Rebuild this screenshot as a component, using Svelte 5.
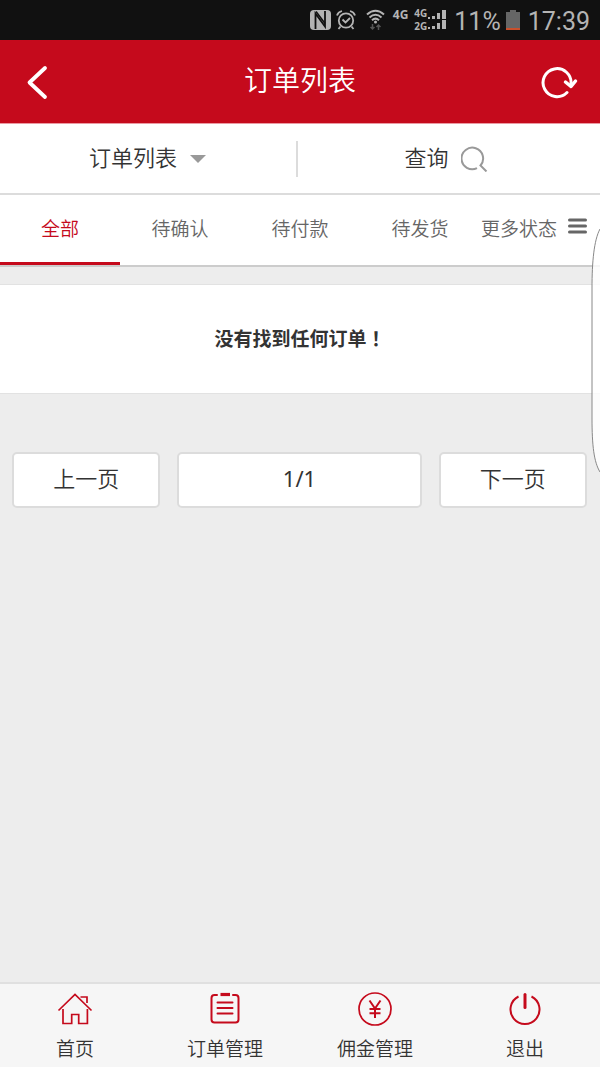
<script>
    const tabs = ['全部', '待确认', '待付款', '待发货'];
    const menu = [
        { name: 'home', label: '首页' },
        { name: 'orders', label: '订单管理' },
        { name: 'commission', label: '佣金管理' },
        { name: 'exit', label: '退出' }
    ];

    let activeTab = '全部';
    let page = 1;
    let pageCount = 1;

    function changePage(step) {
        page = Math.min(pageCount, Math.max(1, page + step));
    }
</script>

<style>
    :global(body) {
        margin: 0;
    }
    .app {
        position: relative;
        display: flex;
        flex-direction: column;
        min-height: 100vh;
        background: #ededed;
        color: #333;
        font-family: "Noto Sans", "Noto Sans CJK SC", sans-serif;
        font-weight: 350;
    }
    button {
        margin: 0;
        padding: 0;
        border: none;
        background: none;
        color: inherit;
        font: inherit;
        cursor: pointer;
    }
    a {
        color: inherit;
        text-decoration: none;
    }
    svg {
        display: block;
        flex: none;
        fill: none;
    }

    /* phone status bar */
    .status {
        display: flex;
        align-items: center;
        justify-content: flex-end;
        height: 40px;
        padding-right: 10px;
        background: #111;
        color: #b4b4b4;
        font-family: Roboto, sans-serif;
        font-size: 25px;
        font-weight: 400;
    }
    .status .time {
        padding-top: 2px;
    }
    .status .nfc {
        margin-right: 5px;
    }
    .status .wifi {
        margin: 0 8px 0 10px;
    }
    .network {
        margin-bottom: 10px;
        font: bold 12px/12px "Noto Sans", sans-serif;
    }
    .sims {
        display: flex;
        align-items: center;
        gap: 1px;
        margin: 0 8px 0 6px;
        font: bold 10px/13px "Open Sans", sans-serif;
    }
    .sims div {
        display: flex;
        flex-direction: column;
    }
    .battery {
        margin: 0 8px 0 5px;
    }

    header {
        display: flex;
        align-items: center;
        justify-content: space-between;
        height: 84px;
        padding: 0 22px;
        border-bottom: 1px solid #eb9aa3;
        box-sizing: border-box;
        background: #c50a1c;
        color: #fff;
    }
    header button {
        display: flex;
        width: 38px;
    }
    header button:last-child {
        justify-content: flex-end;
    }
    h1 {
        margin: 0 0 3px;
        font-size: 28px;
        font-weight: 350;
        line-height: 40px;
    }

    .filters {
        display: flex;
        align-items: center;
        height: 69px;
        padding-right: 6px;
        border-bottom: 2px solid #dcdcdc;
        background: #fff;
        font-size: 22px;
        line-height: 32px;
    }
    .filters button {
        display: flex;
        flex: 1;
        align-items: center;
        justify-content: center;
        gap: 12px;
    }
    .filters span {
        padding-bottom: 4px;
    }
    .filters button + button {
        border-left: 2px solid #dcdcdc;
    }

    .tabs {
        display: flex;
        height: 70px;
        border-bottom: 2px solid #ccc;
        background: #fff;
        color: #666;
        font-size: 19px;
        line-height: 28px;
    }
    .tabs button {
        display: flex;
        flex: 0 0 20%;
        align-items: center;
        justify-content: center;
        gap: 11px;
        border-top: 3px solid transparent;
        border-bottom: 3px solid transparent;
        white-space: nowrap;
    }
    .tabs span {
        padding-bottom: 3px;
    }
    .tabs .active {
        border-bottom-color: #c50a1c;
        color: #c50a1c;
    }
    .tabs .more {
        padding-right: 12px;
    }
    .tabs svg {
        margin-bottom: 8px;
    }

    main {
        flex: 1;
        padding-top: 17px;
    }
    .empty {
        margin: 0;
        padding: 40px 0;
        border: solid #e2e2e2;
        border-width: 1px 0;
        background: #fff;
        font-size: 19px;
        font-weight: 700;
        line-height: 28px;
        text-align: center;
    }
    /* keeps the exclamation mark in the middle of its cell */
    .mark {
        font-family: "Noto Sans CJK TC", sans-serif;
        line-height: 1;
    }
    .pager {
        display: flex;
        gap: 17px;
        margin: 58px 13px 0 12px;
        font-size: 22px;
        line-height: 32px;
    }
    .pager > * {
        flex: 3;
        box-sizing: border-box;
        padding: 8px 0 12px;
        border: 2px solid #dcdcdc;
        border-radius: 5px;
        background: #fff;
        text-align: center;
    }
    .pager .current {
        flex: 5;
        font-weight: 400;
    }

    footer {
        display: flex;
        border-top: 2px solid #e0e0e0;
        background: #f6f6f6;
    }
    footer a {
        display: flex;
        flex: 1;
        flex-direction: column;
        align-items: center;
        gap: 8px;
        padding: 7px 0 4px;
        font-size: 19px;
        line-height: 28px;
    }
    footer svg {
        stroke: #c50a1c;
        stroke-width: 2;
    }

    /* handle of the slide-in edge panel */
    .edge {
        position: absolute;
        top: 228px;
        right: 0;
    }
</style>

<div class="app">
    <div class="status">
        <svg class="nfc" width="21" height="20" viewBox="0 0 21 20">
            <rect width="21" height="20" rx="4" fill="#b4b4b4" />
            <path d="M5.500 19V3.500L15 16.500V1" stroke="#111" stroke-width="1.800" />
            <path d="M6 1.500l9 12" stroke="#111" stroke-width="1.500" />
        </svg>
        <svg width="20" height="20" viewBox="0 0 20 20" stroke="#b4b4b4" stroke-width="1.800">
            <circle cx="10" cy="10.500" r="7.200" />
            <path d="M6.500 9.500l3 3 4.500-4.500M4.500 16.500l-2 2.500M15.500 16.500l2 2.500M1 5.500Q2 2 6 1M19 5.500Q18 2 14 1" />
        </svg>
        <svg class="wifi" width="19" height="22" viewBox="0 0 19 22" stroke="#b4b4b4" stroke-width="2">
            <path d="M1 5.500Q9.500-2 18 5.500M3.500 8.500Q9.500 3 15.500 8.500M6 11.300Q9.500 8 13 11.300" />
            <circle cx="9.500" cy="13" r="1.500" fill="#b4b4b4" stroke="none" />
            <path d="M6.500 15v5M4.500 18l2 2 2-2M12.500 21v-5M10.500 18l2-2 2 2" stroke="#555" stroke-width="1.500" />
        </svg>
        <span class="network">4G</span>
        <div class="sims">
            <div>
                <span>4G</span>
                <span>2G</span>
            </div>
            <svg width="18" height="20" viewBox="0 0 18 20">
                <path d="M0 7h2v2H0zM4 6h3v3H4zM9 3h3v6H9zM14 0h4v9h-4zM0 17h2v2H0zM4 16h3v3H4zM9 13h3v6H9zM14 10h4v9h-4z" fill="#b4b4b4" />
            </svg>
        </div>
        <span class="time">11%</span>
        <svg class="battery" width="14" height="20" viewBox="0 0 14 20">
            <path d="M0 2h4V0h6v2h4v18H0z" fill="#666" />
            <path d="M0 18h14v2H0z" fill="#c9502c" />
        </svg>
        <span class="time">17:39</span>
    </div>

    <header>
        <button aria-label="返回">
            <svg width="30" height="36" viewBox="0 0 30 36">
                <path d="M23 4L7.500 18.500 23 33" stroke="#fff" stroke-width="3.800" stroke-linecap="round" stroke-linejoin="round" />
            </svg>
        </button>
        <h1>订单列表</h1>
        <button aria-label="刷新">
            <svg width="38" height="36" viewBox="0 0 38 36" stroke="#fff" stroke-width="3" stroke-linecap="round" stroke-linejoin="round">
                <path d="M27 28.500A14 14 0 1 1 31 20" />
                <path d="M25.500 18l5.500 4.500 4.500-5.500" stroke-width="3.500" />
            </svg>
        </button>
    </header>

    <div class="filters">
        <button>
            <span>订单列表</span>
            <svg width="18" height="8" viewBox="0 0 18 8"><path d="M1 0h16L9 8z" fill="#999" /></svg>
        </button>
        <button>
            <span>查询</span>
            <svg width="27" height="26" viewBox="0 0 27 26" stroke="#999" stroke-width="2">
                <path d="M16 22.200A10.800 10.800 0 1 1 19.500 19.500L25.500 25.500" />
            </svg>
        </button>
    </div>

    <nav class="tabs">
        {#each tabs as tab}
            <button class:active={tab === activeTab} on:click={() => activeTab = tab}><span>{tab}</span></button>
        {/each}
        <button class="more">
            <span>更多状态</span>
            <svg width="19" height="16" viewBox="0 0 19 16"><path d="M1.500 2h16M1.500 8h16M1.500 14h16" stroke="#666" stroke-width="3" stroke-linecap="round" /></svg>
        </button>
    </nav>

    <main>
        <p class="empty">没有找到任何订单<span class="mark">！</span></p>
        <div class="pager">
            <button on:click={() => changePage(-1)}>上一页</button>
            <div class="current">{page}/{pageCount}</div>
            <button on:click={() => changePage(1)}>下一页</button>
        </div>
    </main>

    <footer>
        {#each menu as item}
            <a href="#{item.name}">
                <svg width="36" height="36" viewBox="0 0 36 36">
                    {#if item.name === 'home'}
                        <path d="M1.500 19.500L18 3.500l16.500 16M6 18v14.500h8.700v-9h7v9h8.700V18M23.500 6h6.500v6" stroke-width="1.700" />
                    {:else if item.name === 'orders'}
                        <path d="M10 4H7.500a3 3 0 0 0-3 3v21.500a3 3 0 0 0 3 3h21a3 3 0 0 0 3-3V7a3 3 0 0 0-3-3H26M10.500 11.500h15M10.500 17h15M10.500 22.500h15" stroke-linecap="round" />
                        <path d="M13.500 3.500h9.500" stroke-width="3.200" />
                    {:else if item.name === 'commission'}
                        <circle cx="18" cy="18" r="16" stroke-width="1.700" />
                        <path d="M12.500 9.500l5.500 8 5.500-8M18 17v10M12.500 18h11M12.500 22.300h11" />
                    {:else}
                        <path d="M11.500 5.500A14.500 14.500 0 1 0 24.500 5.500" />
                        <path d="M18 3.500v13" stroke-width="3" stroke-linecap="round" />
                    {/if}
                </svg>
                {item.label}
            </a>
        {/each}
    </footer>

    <svg class="edge" width="9" height="246" viewBox="0 0 9 246">
        <path d="M9 1C3 12 1 34 1 60v130c0 28 2 44 8 54" fill="#fff" fill-opacity="0.8" stroke="#888" />
    </svg>
</div>
